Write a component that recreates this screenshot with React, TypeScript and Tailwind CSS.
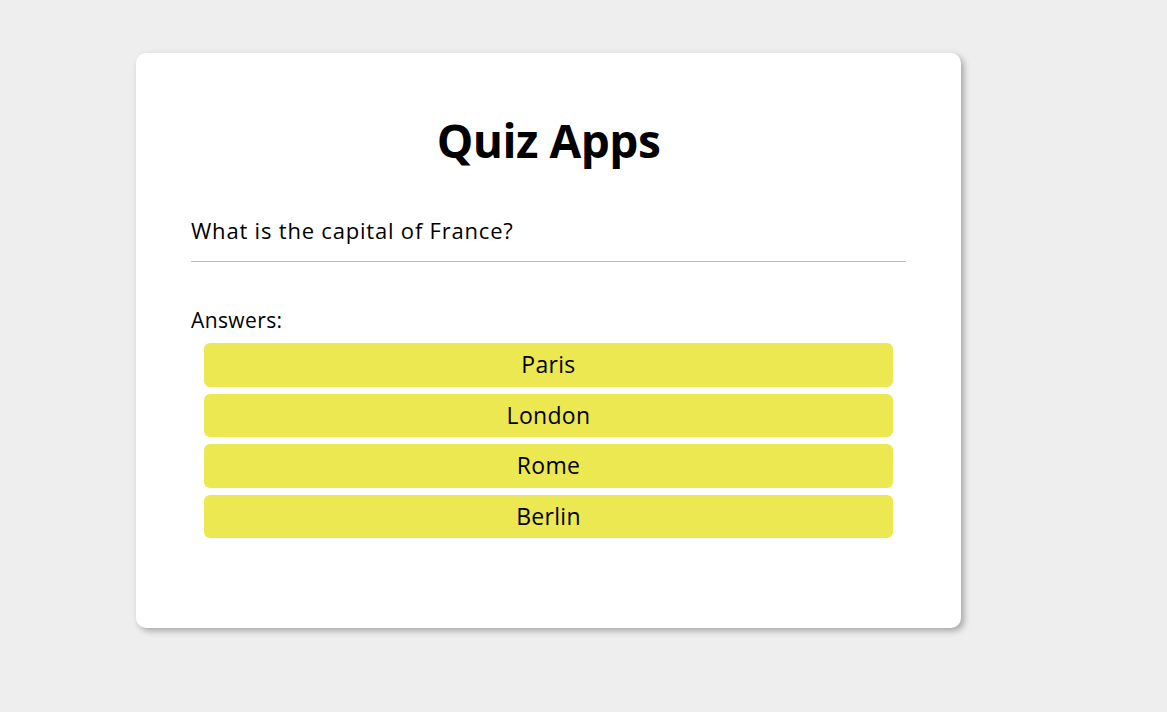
const answers = ["Paris", "London", "Rome", "Berlin"];

export default function App() {
  return (
    <main
      className="min-h-screen bg-[#eeeeee] pt-[53px] pl-[136px] text-black"
      style={{ fontFamily: '"Open Sans", "Noto Sans", sans-serif' }}
    >
      <div className="flex h-[575px] w-[825px] flex-col rounded-[10px] bg-white px-[55px] pt-[67px] shadow-[3px_3px_6px_rgba(0,0,0,0.3)]">
        <h1 className="-mt-[4px] text-center text-[46px] font-bold leading-[48px] tracking-[-0.5px]">
          Quiz Apps
        </h1>

        <p className="mt-[52px] text-[22px] leading-[28px] tracking-[0.8px]">
          What is the capital of France?
        </p>
        <hr className="mt-[17px] border-t border-[#bbbbbb]" />

        <p className="mt-[45px] text-[21px] leading-[26px] tracking-[0.4px]">Answers:</p>

        <ul className="mt-[10px] flex flex-col gap-[7px] px-[13px]">
          {answers.map((a) => (
            <li key={a}>
              <button className="h-[43.5px] w-full rounded-[6px] bg-[#ece852] text-center text-[23px] leading-[43px] tracking-[0.3px]">
                {a}
              </button>
            </li>
          ))}
        </ul>
      </div>
    </main>
  );
}
